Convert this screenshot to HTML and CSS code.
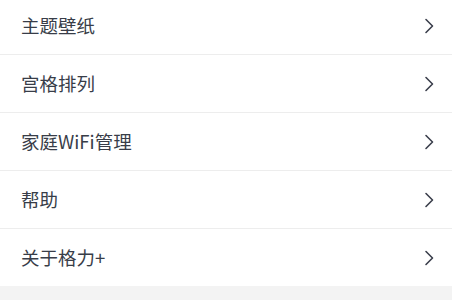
FILE: index.html
```html
<!DOCTYPE html>
<html lang="zh">
<head>
<meta charset="utf-8">
<link rel="stylesheet" href="styles.css">
</head>
<body>
<div class="list">
  <div class="row"><span class="label">主题壁纸</span><svg class="chev" viewBox="0 0 10 16"><path d="M2 1.5 L8.5 8 L2 14.5"/></svg></div>
  <div class="row"><span class="label">宫格排列</span><svg class="chev" viewBox="0 0 10 16"><path d="M2 1.5 L8.5 8 L2 14.5"/></svg></div>
  <div class="row"><span class="label">家庭WiFi管理</span><svg class="chev" viewBox="0 0 10 16"><path d="M2 1.5 L8.5 8 L2 14.5"/></svg></div>
  <div class="row"><span class="label">帮助</span><svg class="chev" viewBox="0 0 10 16"><path d="M2 1.5 L8.5 8 L2 14.5"/></svg></div>
  <div class="row last"><span class="label">关于格力+</span><svg class="chev" viewBox="0 0 10 16"><path d="M2 1.5 L8.5 8 L2 14.5"/></svg></div>
</div>
<div class="footer"></div>
</body>
</html>
```
FILE: styles.css
```css
html, body {
  margin: 0;
  padding: 0;
  background: #f3f3f3;
  height: 100%;
  overflow: hidden;
}
body {
  font-family: "Noto Sans CJK SC", "Noto Sans", sans-serif;
}
.list {
  background: #ffffff;
  margin-top: -3px;
  display: flex;
  flex-direction: column;
}
.row {
  height: 57px;
  border-bottom: 1px solid #ededed;
  display: flex;
  align-items: center;
  justify-content: space-between;
  padding: 0 18px 0 21px;
  box-sizing: content-box;
}
.row.last {
  border-bottom: none;
  height: 57px;
}
.label {
  font-size: 18.5px;
  color: #383d48;
  line-height: 1;
}
.chev {
  width: 10px;
  height: 16px;
}
.chev path {
  fill: none;
  stroke: #3b3f4c;
  stroke-width: 1.6;
  stroke-linecap: round;
  stroke-linejoin: round;
}
.footer {
  height: 20px;
  background: #f3f3f3;
}
```
